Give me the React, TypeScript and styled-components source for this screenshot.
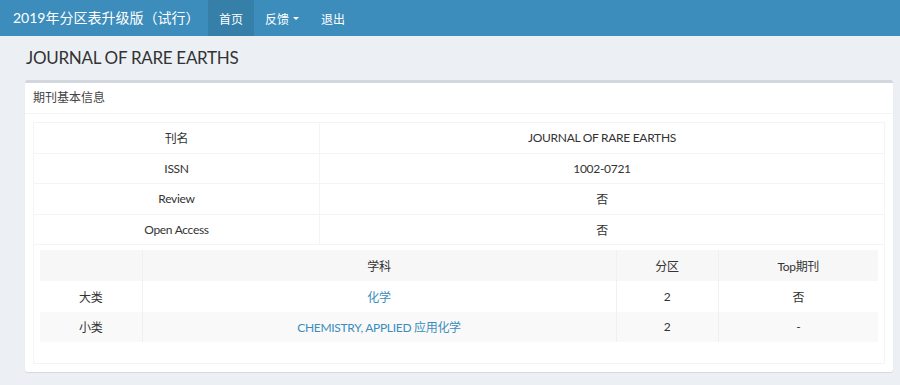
import React from "react";
import styled, { createGlobalStyle } from "styled-components";

const GlobalStyle = createGlobalStyle`
  html, body {
    margin: 0;
    padding: 0;
    background: #ecf0f5;
    font-family: "Lato", "Noto Sans CJK SC", sans-serif;
    color: #333;
  }
  * { box-sizing: border-box; }
`;

const Navbar = styled.header`
  display: flex;
  align-items: stretch;
  height: 36px;
  background: #3c8dbc;
  color: #fff;
`;

const Brand = styled.div`
  width: 208px;
  padding-left: 13px;
  font-size: 14px;
  line-height: 36px;
  white-space: nowrap;
`;

const NavList = styled.nav`
  display: flex;
`;

const NavItem = styled.a<{ $active?: boolean }>`
  display: flex;
  align-items: center;
  padding: 0 11px;
  font-size: 12px;
  color: #fff;
  text-decoration: none;
  background: ${(p) => (p.$active ? "#367fa9" : "transparent")};
`;

const Caret = styled.span`
  display: inline-block;
  width: 0;
  height: 0;
  margin-left: 4px;
  border-top: 3px solid #fff;
  border-left: 3px solid transparent;
  border-right: 3px solid transparent;
`;

const ContentHeader = styled.section`
  padding: 12px 7px 12px 26px;
`;

const Title = styled.h1`
  margin: 0;
  font-size: 17px;
  line-height: 20px;
  letter-spacing: -0.3px;
  font-weight: 400;
  color: #333;
`;

const Content = styled.section`
  padding: 0 7px 12px 25px;
`;

const Box = styled.div`
  background: #fff;
  border-top: 3px solid #d2d6de;
  border-radius: 3px;
  box-shadow: 0 1px 1px rgba(0, 0, 0, 0.1);
`;

const BoxHeader = styled.div`
  height: 31px;
  padding: 0 8px;
  line-height: 30px;
  font-size: 12px;
  color: #444;
  border-bottom: 1px solid #f4f4f4;
`;

const BoxBody = styled.div`
  padding: 8px;
`;

const Table = styled.table`
  width: 100%;
  border-collapse: collapse;
  border: 1px solid #f4f4f4;
  font-size: 12px;
  letter-spacing: -0.3px;
`;

const Cell = styled.td`
  height: 30.5px;
  padding: 0 8px;
  border: 1px solid #f4f4f4;
  text-align: center;
  color: #333;
`;

const NestedCell = styled.td`
  padding: 5px 6px 21px;
  border: 1px solid #f4f4f4;
`;

const HeadCell = styled.th`
  height: 31px;
  padding: 0 8px;
  font-weight: 400;
  text-align: center;
  background: #f7f7f7;
  border-left: 1px solid #f0f0f0;
  color: #333;
  &:first-child { border-left: none; }
`;

const SubjectRow = styled.tr<{ $striped?: boolean }>`
  background: ${(p) => (p.$striped ? "#f9f9f9" : "#fff")};
`;

const SubjectCell = styled.td`
  height: 30.5px;
  padding: 0 8px;
  text-align: center;
  border-left: 1px solid #f0f0f0;
  color: #333;
  &:first-child { border-left: none; }
`;

const SubjectTable = styled.table`
  width: 100%;
  border-collapse: collapse;
  font-size: 12px;
`;

const Link = styled.a`
  color: #3c8dbc;
  text-decoration: none;
`;

const info: [string, string][] = [
  ["刊名", "JOURNAL OF RARE EARTHS"],
  ["ISSN", "1002-0721"],
  ["Review", "否"],
  ["Open Access", "否"],
];

const subjects = [
  { kind: "大类", name: "化学", zone: "2", top: "否" },
  { kind: "小类", name: "CHEMISTRY, APPLIED 应用化学", zone: "2", top: "-" },
];

export default function App() {
  return (
    <>
      <GlobalStyle />
      <Navbar>
        <Brand>2019年分区表升级版（试行）</Brand>
        <NavList>
          <NavItem href="#" $active>首页</NavItem>
          <NavItem href="#">
            反馈<Caret />
          </NavItem>
          <NavItem href="#">退出</NavItem>
        </NavList>
      </Navbar>
      <ContentHeader>
        <Title>JOURNAL OF RARE EARTHS</Title>
      </ContentHeader>
      <Content>
        <Box>
          <BoxHeader>期刊基本信息</BoxHeader>
          <BoxBody>
            <Table>
              <colgroup>
                <col style={{ width: "286px" }} />
                <col />
              </colgroup>
              <tbody>
                {info.map(([k, v]) => (
                  <tr key={k}>
                    <Cell>{k}</Cell>
                    <Cell>{v}</Cell>
                  </tr>
                ))}
                <tr>
                  <NestedCell colSpan={2}>
                    <SubjectTable>
                      <colgroup>
                        <col style={{ width: "102px" }} />
                        <col />
                        <col style={{ width: "102px" }} />
                        <col style={{ width: "160px" }} />
                      </colgroup>
                      <thead>
                        <tr>
                          <HeadCell></HeadCell>
                          <HeadCell>学科</HeadCell>
                          <HeadCell>分区</HeadCell>
                          <HeadCell>Top期刊</HeadCell>
                        </tr>
                      </thead>
                      <tbody>
                        {subjects.map((s, i) => (
                          <SubjectRow key={s.kind} $striped={i % 2 === 1}>
                            <SubjectCell>{s.kind}</SubjectCell>
                            <SubjectCell>
                              <Link href="#">{s.name}</Link>
                            </SubjectCell>
                            <SubjectCell>{s.zone}</SubjectCell>
                            <SubjectCell>{s.top}</SubjectCell>
                          </SubjectRow>
                        ))}
                      </tbody>
                    </SubjectTable>
                  </NestedCell>
                </tr>
              </tbody>
            </Table>
          </BoxBody>
        </Box>
      </Content>
    </>
  );
}
